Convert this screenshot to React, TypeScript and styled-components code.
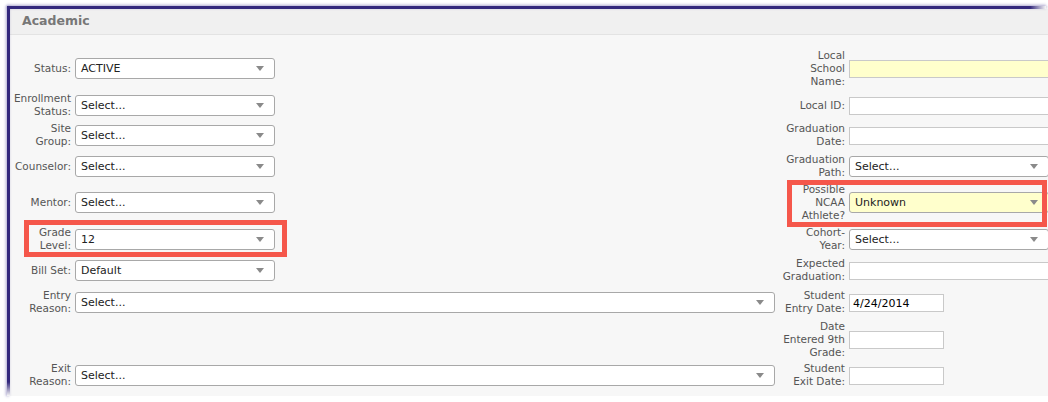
import styled, { createGlobalStyle } from 'styled-components';

type FieldKind = 'select' | 'text' | 'date';

type Field = {
  label: string[];
  kind: FieldKind;
  value?: string;
  wide?: boolean;
  highlight?: boolean;
};

type Row = {
  left?: Field;
  right: Field;
};

const GlobalStyle = createGlobalStyle`
  html, body {
    margin: 0;
    padding: 0;
    background: #ffffff;
  }
  body {
    font-family: "DejaVu Sans", Verdana, sans-serif;
    overflow: hidden;
    width: 1048px;
    height: 402px;
  }
`;

const Frame = styled.section`
  position: relative;
  margin: 6px 0 0 7px;
  padding: 3px 0 0 3px;
  height: 390px;
  background: #f7f7f7;
  box-sizing: border-box;

  &::before {
    content: '';
    position: absolute;
    left: 0;
    top: 0;
    right: 2px;
    height: 3px;
    background: linear-gradient(to right, #33287c calc(100% - 16px), rgba(51, 40, 124, 0));
    box-shadow: 0 -1px 3px rgba(60, 48, 140, 0.45);
  }

  &::after {
    content: '';
    position: absolute;
    left: 0;
    top: 0;
    bottom: 0;
    width: 3px;
    background: linear-gradient(to bottom, #33287c calc(100% - 14px), rgba(51, 40, 124, 0));
    box-shadow: -1px 0 3px rgba(60, 48, 140, 0.45);
  }
`;

const Header = styled.header`
  height: 25px;
  line-height: 23px;
  padding-left: 12px;
  background: #f0f0f0;
  border-bottom: 1px solid #e3e3e3;
  font-size: 12.5px;
  font-weight: bold;
  color: #777777;
`;

const Body = styled.div`
  padding-top: 13px;
`;

const FormGrid = styled.div`
  display: grid;
  grid-template-columns: 61px 700px 66px 200px;
  grid-template-rows: 40px 34px 26px 36px 36px 38px 24px 40px 34px 38px;
  column-gap: 4px;
  align-items: center;
`;

const Label = styled.div`
  justify-self: end;
  text-align: right;
  font-size: 10.5px;
  line-height: 13px;
  color: #555555;
  white-space: nowrap;
`;

const SelectBox = styled.div<{ $wide?: boolean; $highlight?: boolean }>`
  display: flex;
  align-items: center;
  justify-content: space-between;
  width: ${(p) => (p.$wide ? '700px' : '200px')};
  height: 21px;
  box-sizing: border-box;
  padding: 0 10px 0 5px;
  background: ${(p) => (p.$highlight ? '#ffffcc' : '#ffffff')};
  border: 1px solid #a8a8a8;
  border-radius: 3px;
  font-size: 11px;
  color: #222222;
`;

const Arrow = styled.span`
  width: 0;
  height: 0;
  border-left: 4px solid transparent;
  border-right: 4px solid transparent;
  border-top: 5px solid #8a8a8a;
`;

const TextBox = styled.input<{ $narrow?: boolean; $highlight?: boolean }>`
  width: ${(p) => (p.$narrow ? '95px' : '200px')};
  height: 18px;
  box-sizing: border-box;
  margin: 0;
  padding: 0 3px;
  background: ${(p) => (p.$highlight ? '#ffffcc' : '#ffffff')};
  border: 1px solid #c9c9c9;
  border-radius: 0;
  font-family: "DejaVu Sans", Verdana, sans-serif;
  font-size: 11px;
  color: #000000;
  outline: none;
`;

const Callout = styled.div<{ $x: number; $y: number; $w: number; $h: number }>`
  position: absolute;
  left: ${(p) => p.$x}px;
  top: ${(p) => p.$y}px;
  width: ${(p) => p.$w}px;
  height: ${(p) => p.$h}px;
  box-sizing: border-box;
  border: 5px solid #f5574b;
  pointer-events: none;
`;

const sel = (label: string[], value = 'Select...', extra: Partial<Field> = {}): Field => ({
  label,
  kind: 'select',
  value,
  ...extra,
});

const rows: Row[] = [
  {
    left: sel(['Status:'], 'ACTIVE'),
    right: { label: ['Local', 'School', 'Name:'], kind: 'text', highlight: true },
  },
  {
    left: sel(['Enrollment', 'Status:']),
    right: { label: ['Local ID:'], kind: 'text' },
  },
  {
    left: sel(['Site', 'Group:']),
    right: { label: ['Graduation', 'Date:'], kind: 'text' },
  },
  {
    left: sel(['Counselor:']),
    right: sel(['Graduation', 'Path:']),
  },
  {
    left: sel(['Mentor:']),
    right: sel(['Possible', 'NCAA', 'Athlete?'], 'Unknown', { highlight: true }),
  },
  {
    left: sel(['Grade', 'Level:'], '12'),
    right: sel(['Cohort-', 'Year:']),
  },
  {
    left: sel(['Bill Set:'], 'Default'),
    right: { label: ['Expected', 'Graduation:'], kind: 'text' },
  },
  {
    left: sel(['Entry', 'Reason:'], 'Select...', { wide: true }),
    right: { label: ['Student', 'Entry Date:'], kind: 'date', value: '4/24/2014' },
  },
  {
    right: { label: ['Date', 'Entered 9th', 'Grade:'], kind: 'date' },
  },
  {
    left: sel(['Exit', 'Reason:'], 'Select...', { wide: true }),
    right: { label: ['Student', 'Exit Date:'], kind: 'date' },
  },
];

function FieldLabel({ lines }: { lines: string[] }) {
  return (
    <Label>
      {lines.map((line, i) => (
        <div key={i}>{line}</div>
      ))}
    </Label>
  );
}

function FieldControl({ field }: { field: Field }) {
  if (field.kind === 'select') {
    return (
      <SelectBox $wide={field.wide} $highlight={field.highlight}>
        <span>{field.value}</span>
        <Arrow />
      </SelectBox>
    );
  }
  return (
    <TextBox
      readOnly
      value={field.value ?? ''}
      $narrow={field.kind === 'date'}
      $highlight={field.highlight}
    />
  );
}

export default function App() {
  return (
    <>
      <GlobalStyle />
      <Frame>
        <Header>Academic</Header>
        <Body>
          <FormGrid>
            {rows.map((row, i) => [
              row.left ? <FieldLabel key={`ll${i}`} lines={row.left.label} /> : <div key={`ll${i}`} />,
              row.left ? (
                <div key={`lf${i}`}>
                  <FieldControl field={row.left} />
                </div>
              ) : (
                <div key={`lf${i}`} />
              ),
              <FieldLabel key={`rl${i}`} lines={row.right.label} />,
              <div key={`rf${i}`}>
                <FieldControl field={row.right} />
              </div>,
            ])}
          </FormGrid>
        </Body>
        <Callout $x={17} $y={214} $w={263} $h={37} />
        <Callout $x={780} $y={174} $w={260} $h={47} />
      </Frame>
    </>
  );
}
